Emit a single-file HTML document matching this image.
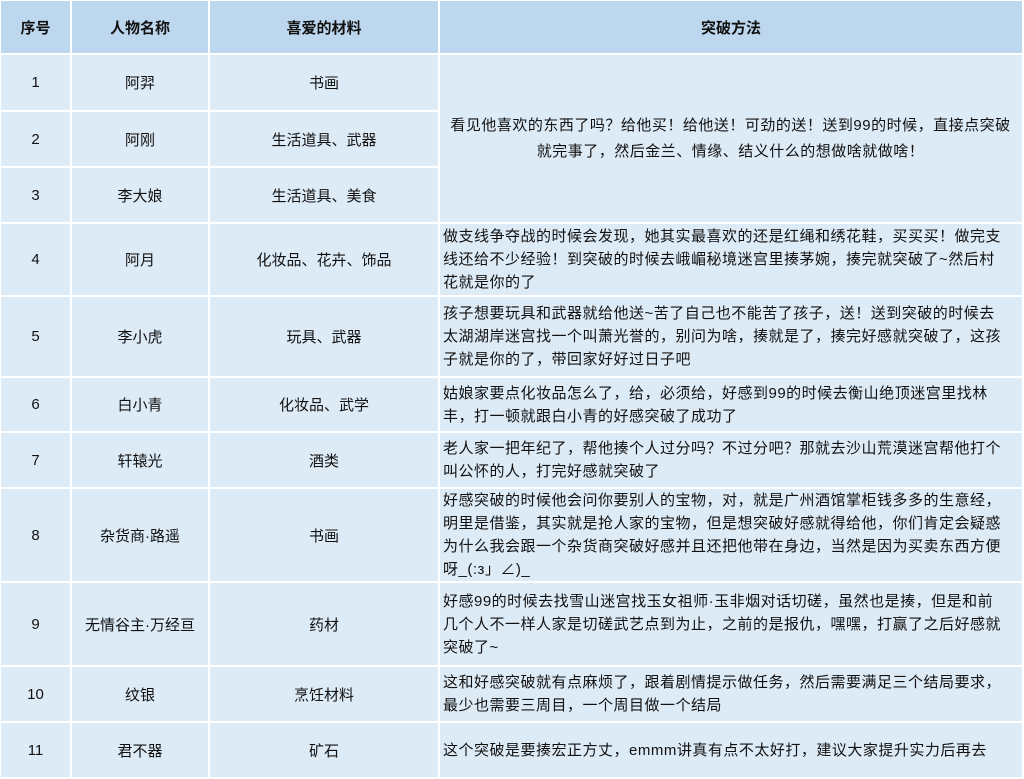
<!DOCTYPE html>
<html><head><meta charset="utf-8"><style>
html,body{margin:0;padding:0;background:#fff;}
body{width:1024px;height:778px;overflow:hidden;font-family:"Liberation Sans","Noto Sans CJK SC",sans-serif;font-size:15px;color:#111;}
table{border-collapse:collapse;table-layout:fixed;width:1023px;margin-left:-1px;margin-top:-1px;}
td,th{border:2px solid #fff;background:#ddebf7;text-align:center;padding:0;vertical-align:middle;}
th{background:#bdd7ee;font-weight:bold;height:52px;}
td.t{text-align:left;padding:0 4px 0 3px;line-height:23px;letter-spacing:0.5px;}
td.c{text-align:center;line-height:26px;}
</style></head><body>
<table>
<colgroup><col style="width:71px"><col style="width:138px"><col style="width:230px"><col style="width:584px"></colgroup>
<tr><th>序号</th><th>人物名称</th><th>喜爱的材料</th><th>突破方法</th></tr>
<tr style="height:57px"><td>1</td><td>阿羿</td><td>书画</td><td class="t c" rowspan="3">看见他喜欢的东西了吗？给他买！给他送！可劲的送！送到99的时候，直接点突破<br>就完事了，然后金兰、情缘、结义什么的想做啥就做啥！</td></tr>
<tr style="height:56px"><td>2</td><td>阿刚</td><td>生活道具、武器</td></tr>
<tr style="height:56px"><td>3</td><td>李大娘</td><td>生活道具、美食</td></tr>
<tr style="height:73px"><td>4</td><td>阿月</td><td>化妆品、花卉、饰品</td><td class="t">做支线争夺战的时候会发现，她其实最喜欢的还是红绳和绣花鞋，买买买！做完支<br>线还给不少经验！到突破的时候去峨嵋秘境迷宫里揍茅婉，揍完就突破了~然后村<br>花就是你的了</td></tr>
<tr style="height:81px"><td>5</td><td>李小虎</td><td>玩具、武器</td><td class="t">孩子想要玩具和武器就给他送~苦了自己也不能苦了孩子，送！送到突破的时候去<br>太湖湖岸迷宫找一个叫萧光誉的，别问为啥，揍就是了，揍完好感就突破了，这孩<br>子就是你的了，带回家好好过日子吧</td></tr>
<tr style="height:55px"><td>6</td><td>白小青</td><td>化妆品、武学</td><td class="t">姑娘家要点化妆品怎么了，给，必须给，好感到99的时候去衡山绝顶迷宫里找林<br>丰，打一顿就跟白小青的好感突破了成功了</td></tr>
<tr style="height:56px"><td>7</td><td>轩辕光</td><td>酒类</td><td class="t">老人家一把年纪了，帮他揍个人过分吗？不过分吧？那就去沙山荒漠迷宫帮他打个<br>叫公怀的人，打完好感就突破了</td></tr>
<tr style="height:94px"><td>8</td><td>杂货商·路遥</td><td>书画</td><td class="t">好感突破的时候他会问你要别人的宝物，对，就是广州酒馆掌柜钱多多的生意经，<br>明里是借鉴，其实就是抢人家的宝物，但是想突破好感就得给他，你们肯定会疑惑<br>为什么我会跟一个杂货商突破好感并且还把他带在身边，当然是因为买卖东西方便<br>呀_(:з」∠)_</td></tr>
<tr style="height:84px"><td>9</td><td>无情谷主·万经亘</td><td>药材</td><td class="t">好感99的时候去找雪山迷宫找玉女祖师·玉非烟对话切磋，虽然也是揍，但是和前<br>几个人不一样人家是切磋武艺点到为止，之前的是报仇，嘿嘿，打赢了之后好感就<br>突破了~</td></tr>
<tr style="height:56px"><td>10</td><td>纹银</td><td>烹饪材料</td><td class="t">这和好感突破就有点麻烦了，跟着剧情提示做任务，然后需要满足三个结局要求，<br>最少也需要三周目，一个周目做一个结局</td></tr>
<tr style="height:56px"><td>11</td><td>君不器</td><td>矿石</td><td class="t">这个突破是要揍宏正方丈，emmm讲真有点不太好打，建议大家提升实力后再去</td></tr>
</table>
</body></html>
